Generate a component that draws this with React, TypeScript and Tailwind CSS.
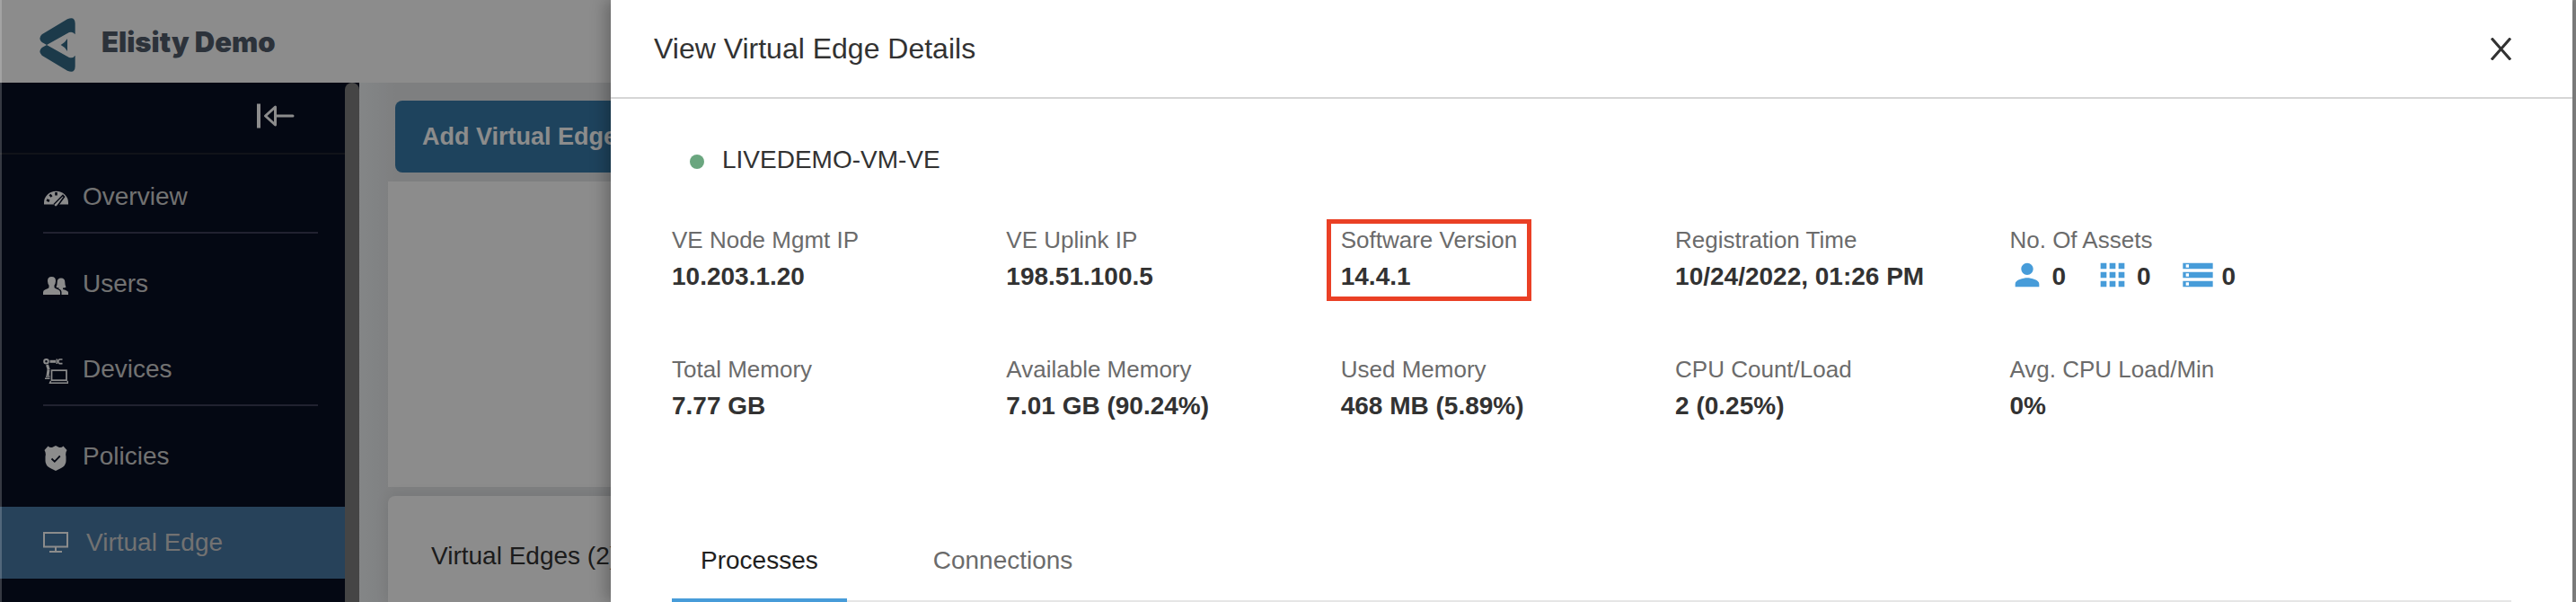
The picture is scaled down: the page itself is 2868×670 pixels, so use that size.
import React from "react";
import { MdApps, MdPerson, MdStorage } from "react-icons/md";

const iconBox = "size-7 shrink-0 mt-1";

function Logo() {
  return (
    <svg viewBox="0 0 120 180" className="h-15 w-10 text-[#336b88]" fill="currentColor" aria-hidden="true">
      <path d="M24 90 L8 81 Q-6 68 8 55 L93 4 Q118 -7 119 18 V55 Q112 44 99 48 Z" />
      <path d="M24 90 L8 99 Q-6 112 8 125 L93 176 Q118 187 119 162 V125 Q112 136 99 132 Z" />
      <path d="M71 90 Q84 84 93 69 V111 Q84 96 71 90 Z" />
    </svg>
  );
}

function CollapseIcon() {
  return (
    <svg viewBox="0 0 42 28" className="h-7 w-[42px]" fill="none" stroke="currentColor" aria-hidden="true">
      <path d="M2 0.5V27.5" strokeWidth="4" />
      <path d="M20.5 4 L9.500 14 L20.500 24 Z" strokeWidth="3" strokeLinejoin="round" />
      <path d="M21 14H40" strokeWidth="3" strokeLinecap="round" />
    </svg>
  );
}

function GaugeIcon() {
  return (
    <svg viewBox="0 0 28 28" className={iconBox} aria-hidden="true">
      <path d="M1 20.500V18.500A13.500 12.800 0 0 1 28 18.500V20.500Z" fill="currentColor" />
      <g stroke="#090f24" fill="none">
        <path d="M14.500 7V10.500M7.500 9.500L9.500 12M4 15.500L7 16.700" strokeWidth="2.600" />
        <path d="M12 20.500L22 10.500L23.500 12L16.500 21.500" strokeWidth="1.600" />
      </g>
      <path d="M12.500 21L22 11.500L15.500 21.500Q13.500 23.500 12.500 21Z" fill="currentColor" />
    </svg>
  );
}

function UsersIcon() {
  return (
    <svg viewBox="0 0 28 28" className={iconBox} fill="currentColor" aria-hidden="true">
      <path d="M9.500 4Q14.200 4 14 9Q13.800 12 12.500 13.500V16Q13 17.200 16 18Q19 19 19 21V24H0V21Q0 19 3 18Q6.200 17 6.500 16V13.500Q5.200 12 5 9Q4.800 4 9.500 4Z" />
      <path d="M20 5.500Q24.300 5.500 24.300 10Q24.300 14 25.500 15.500Q24.500 16.500 22 16.500V18Q28 19.500 28 21.500V24H20.500V21Q20.500 18.500 17 17.200L18 16.500Q15.800 16.500 14.500 15.500Q15.700 14 15.700 10Q15.700 5.500 20 5.500Z" />
    </svg>
  );
}

function DevicesIcon() {
  return (
    <svg viewBox="0 0 28 28" className={iconBox} fill="none" stroke="currentColor" aria-hidden="true">
      <circle cx="3.500" cy="3.300" r="2.300" strokeWidth="2" />
      <path d="M7.500 3.300H14" strokeWidth="3" />
      <path d="M15.300 0.500V6" strokeWidth="1.500" />
      <path d="M21.500 1H18.500Q17 1 17 3.300Q17 5.600 18.500 5.600H21.500" strokeWidth="1.600" />
      <path d="M4.500 7L6.300 12.500" strokeWidth="3" />
      <path d="M6 12.500L5 19" strokeWidth="3" />
      <path d="M3 20H7.500M2 22.300H7.500" strokeWidth="1.600" />
      <rect x="9.500" y="13.200" width="16.500" height="11" strokeWidth="1.700" />
      <path d="M8.500 25L7.500 27.200H28L27 25" strokeWidth="1.400" />
    </svg>
  );
}

function BadgeIcon() {
  return (
    <svg viewBox="0 0 28 28" className={iconBox} aria-hidden="true">
      <path
        d="M5.500 0.500Q7.500 2.500 10 2L14 0L18 2Q20.500 2.500 22.500 0.500L26.500 5Q24.500 8 25.500 12V17Q25.500 22 20 25L14 28L8 25Q2.500 22 2.500 17V12Q3.500 8 1.500 5Z"
        fill="currentColor"
      />
      <path d="M9.500 14.500L12.800 17.700L18.800 11.500" fill="none" stroke="#090f24" strokeWidth="1.800" />
    </svg>
  );
}

function MonitorIcon() {
  return (
    <svg viewBox="0 0 28 28" className={iconBox} fill="none" stroke="currentColor" strokeWidth="2" aria-hidden="true">
      <rect x="1" y="1" width="26" height="15.500" />
      <path d="M14 17V22M7 22H21" />
    </svg>
  );
}

const navItems = [
  { label: "Overview", Icon: GaugeIcon, divider: true },
  { label: "Users", Icon: UsersIcon },
  { label: "Devices", Icon: DevicesIcon, divider: true },
  { label: "Policies", Icon: BadgeIcon },
  { label: "Virtual Edge", Icon: MonitorIcon, active: true },
];

function Sidebar() {
  return (
    <aside className="flex w-[400px] shrink-0 bg-[#090f24]">
      <div className="flex-1">
        <div className="flex h-20 items-center justify-end border-b-2 border-[#20232f] pr-14 pb-1">
          <button type="button" aria-label="Collapse menu" className="text-white">
            <CollapseIcon />
          </button>
        </div>
        <nav className="flex flex-col gap-4 pt-2 text-[28px] leading-10 text-[#cfcfcf]">
          {navItems.map(({ label, Icon, divider, active }) => (
            <a
              key={label}
              href="#"
              aria-current={active ? "page" : undefined}
              className={`block h-20 pr-[30px] pl-12 ${active ? "bg-[#4878a4]" : ""}`}
            >
              <span
                className={`flex h-20 items-center ${active ? "gap-5" : "gap-4"} ${
                  divider ? "border-b-2 border-[#3d3f58]" : ""
                }`}
              >
                <span className="text-white">
                  <Icon />
                </span>
                {label}
              </span>
            </a>
          ))}
        </nav>
      </div>
      <div className="w-4 rounded-t-full bg-[#7f7f7f]" />
    </aside>
  );
}

function Field({ label, children, marked }: { label: string; children: React.ReactNode; marked?: boolean }) {
  return (
    <div className="relative col-span-2 whitespace-nowrap">
      <dt className="text-[26px] leading-[42px] text-[#6b6b6b]">{label}</dt>
      <dd className="h-10 text-[28px] leading-10 font-bold">{children}</dd>
      {marked && <div className="absolute -top-0.5 -bottom-[7px] -left-4 w-[228px] border-5 border-[#ea4025]" />}
    </div>
  );
}

const assets = [
  { name: "Users", Icon: MdPerson, count: 0 },
  { name: "Apps", Icon: MdApps, count: 0 },
  { name: "Devices", Icon: MdStorage, count: 0 },
];

function Drawer() {
  return (
    <section
      role="dialog"
      aria-label="View Virtual Edge Details"
      className="absolute inset-y-0 right-1 left-[680px] flex flex-col bg-white text-[#323232] shadow-[-6px_0_16px_rgba(0,0,0,0.25)]"
    >
      <header className="flex h-[110px] shrink-0 items-center justify-between border-b-2 border-[#d6d6d6] pr-[68px] pl-12">
        <h1 className="text-[32px] leading-10">View Virtual Edge Details</h1>
        <button type="button" aria-label="Close">
          <svg viewBox="0 0 23 25" className="h-[25px] w-[23px]" fill="none" stroke="currentColor" strokeWidth="3">
            <path d="M1 0.500L22 24.500M22 0.500L1 24.500" />
          </svg>
        </button>
      </header>
      <div className="px-[68px] pt-12">
        <h2 className="flex items-center gap-5 pl-5 text-[28px] leading-10">
          <span className="mt-1 size-4 rounded-full bg-[#6aa67f]" />
          LIVEDEMO-VM-VE
        </h2>
        <dl className="mt-12 grid grid-cols-11 gap-y-[62px]">
          <Field label="VE Node Mgmt IP">10.203.1.20</Field>
          <Field label="VE Uplink IP">198.51.100.5</Field>
          <Field label="Software Version" marked>
            14.4.1
          </Field>
          <Field label="Registration Time">10/24/2022, 01:26 PM</Field>
          <Field label="No. Of Assets">
            <span className="flex gap-8">
              {assets.map(({ name, Icon, count }) => (
                <span key={name} className="flex gap-[7px]">
                  <Icon className="-mt-0.5 size-10 text-[#479cd9]" aria-label={name} />
                  {count}
                </span>
              ))}
            </span>
          </Field>
          <div />
          <Field label="Total Memory">7.77 GB</Field>
          <Field label="Available Memory">7.01 GB (90.24%)</Field>
          <Field label="Used Memory">468 MB (5.89%)</Field>
          <Field label="CPU Count/Load">2 (0.25%)</Field>
          <Field label="Avg. CPU Load/Min">0%</Field>
        </dl>
        <div role="tablist" className="mt-28 flex gap-16 text-[28px] leading-10 shadow-[inset_0_-2px_0_#e6e6e6]">
          <button
            type="button"
            role="tab"
            aria-selected="true"
            className="border-b-4 border-[#479cd9] px-8 pt-5 pb-[22px] text-[#202020]"
          >
            Processes
          </button>
          <button
            type="button"
            role="tab"
            aria-selected="false"
            className="border-b-4 border-transparent px-8 pt-5 pb-[22px] text-[#6b6b6b]"
          >
            Connections
          </button>
        </div>
      </div>
    </section>
  );
}

export default function App() {
  return (
    <div className="relative flex h-screen flex-col overflow-hidden bg-white font-['Liberation_Sans',Arial,sans-serif]">
      <header className="flex h-[92px] shrink-0 items-center gap-[29px] pt-[7px] pl-11">
        <Logo />
        <span className="pb-1 font-['Inter',sans-serif] text-[31px] font-black text-[#505b6b]">Elisity Demo</span>
      </header>
      <div className="flex min-h-0 flex-1">
        <Sidebar />
        <main className="flex min-w-0 flex-1 flex-col bg-[linear-gradient(90deg,#f0f4f6_0px,#e6e8ea_40px)] pt-5 pl-8 text-[28px] leading-10">
          <button
            type="button"
            className="ml-2 h-20 self-start rounded-lg bg-[#377aa9] px-[30px] text-[27px] font-bold text-white"
          >
            Add Virtual Edge
          </button>
          <div className="mt-2.5 h-[340px] shrink-0 bg-white" />
          <div className="mt-2.5 flex-1 rounded-t-lg bg-white px-12 pt-[47px] text-[#333333] shadow-[0_0_16px_rgba(0,0,0,0.08)]">
            Virtual Edges (2)
          </div>
        </main>
      </div>
      <div className="absolute inset-0 bg-black/45" />
      <div className="absolute inset-y-0 left-0 w-0.5 bg-white/20" />
      <div className="absolute inset-y-0 right-0 w-1 rounded-tl-full bg-[#7f7f7f]" />
      <Drawer />
    </div>
  );
}
